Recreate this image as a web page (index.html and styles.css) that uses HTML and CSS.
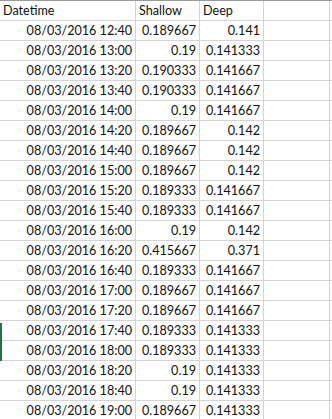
FILE: index.html
```html
<!DOCTYPE html>
<html>
<head>
<meta charset="utf-8">
<link rel="stylesheet" href="styles.css">
</head>
<body>
<div class="sheet">
  <div class="mark"></div>
  <div class="grid" id="grid">
    <div class="c h">Datetime</div><div class="c h">Shallow</div><div class="c h">Deep</div><div class="c"></div><div class="c e"></div>
    <div class="c">08/03/2016 12:40</div><div class="c">0.189667</div><div class="c">0.141</div><div class="c"></div><div class="c e"></div>
    <div class="c">08/03/2016 13:00</div><div class="c">0.19</div><div class="c">0.141333</div><div class="c"></div><div class="c e"></div>
    <div class="c">08/03/2016 13:20</div><div class="c">0.190333</div><div class="c">0.141667</div><div class="c"></div><div class="c e"></div>
    <div class="c">08/03/2016 13:40</div><div class="c">0.190333</div><div class="c">0.141667</div><div class="c"></div><div class="c e"></div>
    <div class="c">08/03/2016 14:00</div><div class="c">0.19</div><div class="c">0.141667</div><div class="c"></div><div class="c e"></div>
    <div class="c">08/03/2016 14:20</div><div class="c">0.189667</div><div class="c">0.142</div><div class="c"></div><div class="c e"></div>
    <div class="c">08/03/2016 14:40</div><div class="c">0.189667</div><div class="c">0.142</div><div class="c"></div><div class="c e"></div>
    <div class="c">08/03/2016 15:00</div><div class="c">0.189667</div><div class="c">0.142</div><div class="c"></div><div class="c e"></div>
    <div class="c">08/03/2016 15:20</div><div class="c">0.189333</div><div class="c">0.141667</div><div class="c"></div><div class="c e"></div>
    <div class="c">08/03/2016 15:40</div><div class="c">0.189333</div><div class="c">0.141667</div><div class="c"></div><div class="c e"></div>
    <div class="c">08/03/2016 16:00</div><div class="c">0.19</div><div class="c">0.142</div><div class="c"></div><div class="c e"></div>
    <div class="c">08/03/2016 16:20</div><div class="c">0.415667</div><div class="c">0.371</div><div class="c"></div><div class="c e"></div>
    <div class="c">08/03/2016 16:40</div><div class="c">0.189333</div><div class="c">0.141667</div><div class="c"></div><div class="c e"></div>
    <div class="c">08/03/2016 17:00</div><div class="c">0.189667</div><div class="c">0.141667</div><div class="c"></div><div class="c e"></div>
    <div class="c">08/03/2016 17:20</div><div class="c">0.189667</div><div class="c">0.141667</div><div class="c"></div><div class="c e"></div>
    <div class="c">08/03/2016 17:40</div><div class="c">0.189333</div><div class="c">0.141333</div><div class="c"></div><div class="c e"></div>
    <div class="c">08/03/2016 18:00</div><div class="c">0.189333</div><div class="c">0.141333</div><div class="c"></div><div class="c e"></div>
    <div class="c">08/03/2016 18:20</div><div class="c">0.19</div><div class="c">0.141333</div><div class="c"></div><div class="c e"></div>
    <div class="c">08/03/2016 18:40</div><div class="c">0.19</div><div class="c">0.141333</div><div class="c"></div><div class="c e"></div>
    <div class="c">08/03/2016 19:00</div><div class="c">0.189667</div><div class="c">0.141333</div><div class="c"></div><div class="c e"></div>
  </div>
</div>
</body>
</html>
```
FILE: styles.css
```css
html, body {
  margin: 0;
  padding: 0;
  background: #ffffff;
}
.sheet {
  position: relative;
  width: 332px;
  height: 419px;
  overflow: hidden;
  border-top: 1px solid #9b9b9b;
  box-sizing: border-box;
}
.grid {
  display: grid;
  grid-template-columns: 136px 64px 64px 66px 20px;
  grid-auto-rows: 20px;
  font-family: Lato, "Open Sans", sans-serif;
  font-size: 12.6px;
  color: #111;
}
.c {
  box-sizing: border-box;
  border-right: 1px solid #d4d4d4;
  border-bottom: 1px solid #d4d4d4;
  text-align: right;
  padding: 0 3px 0 3px;
  line-height: 19px;
  white-space: nowrap;
  overflow: hidden;
}
.c.h {
  text-align: left;
}
.mark {
  position: absolute;
  left: 0;
  top: 322px;
  width: 2px;
  height: 38px;
  background: #217346;
}
```
